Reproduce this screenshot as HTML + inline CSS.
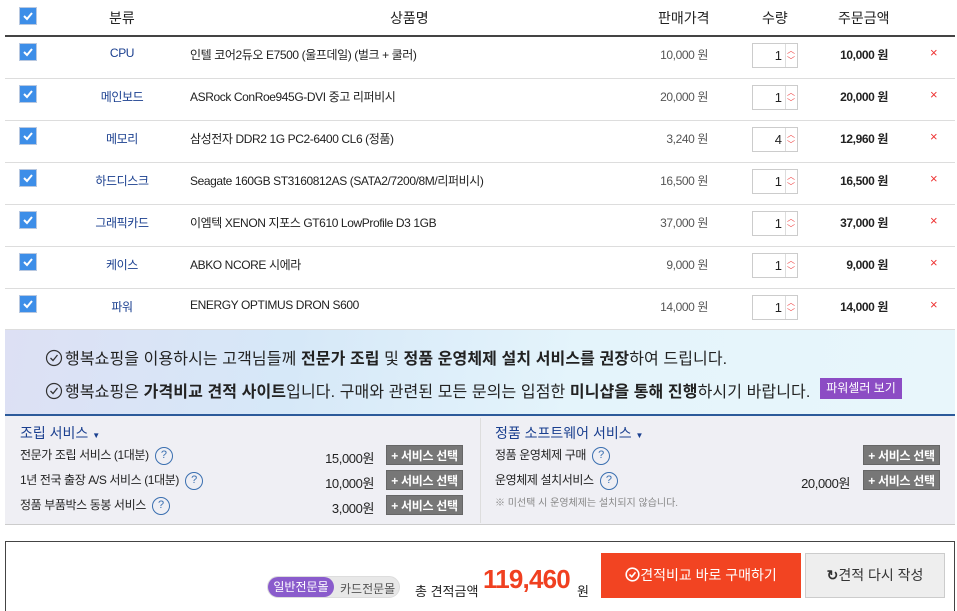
<!DOCTYPE html>
<html><head><meta charset="utf-8"><style>
*{box-sizing:border-box;margin:0;padding:0}
body{width:957px;height:608px;overflow:hidden;background:#fff;font-family:"Liberation Sans","Noto Sans CJK KR",sans-serif;font-size:12px;color:#222;position:relative}
.a{position:absolute;white-space:nowrap}
.r{letter-spacing:-0.4px}
.cb{position:absolute;width:18px;height:18px;background:#3d8ee8;border:1px solid #b8c8e0;left:19px}
.cb svg{position:absolute;left:2px;top:2px}
.hl{position:absolute;left:5px;width:950px;height:1px;background:#ddd}
.q{position:absolute;left:752px;width:46px;height:25px;border:1px solid #ccc;background:#fff}
.q span{position:absolute;right:15px;top:4px;font-size:13px}
.q i{position:absolute;left:32px;top:0;width:1px;height:23px;background:#ddd}
.q b{position:absolute;left:34px;font-size:8px;color:#e44;font-weight:normal}
.btn{position:absolute;width:77px;height:20px;background:#777;color:#fff;font-size:12px;font-weight:bold;text-align:center;line-height:20px;border:1px solid #666;letter-spacing:-0.3px}
.qm{display:inline-block;width:18px;height:18px;border:1.5px solid #3a6fb0;border-radius:50%;color:#3a6fb0;font-size:11px;text-align:center;line-height:15px;margin-left:6px;vertical-align:middle}
.ban{font-size:16px;letter-spacing:0.1px}
.ban svg{vertical-align:-3px;margin-right:2px}
</style></head><body>
<div class="cb" style="top:7px"><svg width="12" height="12"><path d="M2 6 L5 9 L10 3" stroke="#fff" stroke-width="2" fill="none"/></svg></div>
<div class="a" style="left:109px;top:8px;font-size:14px">분류</div>
<div class="a" style="left:390px;top:8px;font-size:14px">상품명</div>
<div class="a" style="left:658px;top:8px;font-size:14px">판매가격</div>
<div class="a" style="left:762px;top:8px;font-size:14px">수량</div>
<div class="a" style="left:838px;top:8px;font-size:14px">주문금액</div>
<div style="position:absolute;left:5px;top:35px;width:950px;height:2px;background:#444"></div>
<div id="rows"></div>
<script>
var d=[["CPU","인텔 코어2듀오 E7500 (울프데일) (벌크 + 쿨러)","10,000","1","10,000"],
["메인보드","ASRock ConRoe945G-DVI 중고 리퍼비시","20,000","1","20,000"],
["메모리","삼성전자 DDR2 1G PC2-6400 CL6 (정품)","3,240","4","12,960"],
["하드디스크","Seagate 160GB ST3160812AS (SATA2/7200/8M/리퍼비시)","16,500","1","16,500"],
["그래픽카드","이엠텍 XENON 지포스 GT610 LowProfile D3 1GB","37,000","1","37,000"],
["케이스","ABKO NCORE 시에라","9,000","1","9,000"],
["파워","ENERGY OPTIMUS DRON S600","14,000","1","14,000"]];
var h="";
d.forEach(function(r,i){var y=37+i*42;
h+='<div class="cb" style="top:'+(y+6)+'px"><svg width="12" height="12"><path d="M2 6 L5 9 L10 3" stroke="#fff" stroke-width="2" fill="none"/></svg></div>';
h+='<div class="a r" style="left:62px;width:120px;text-align:center;top:'+(y+9)+'px;color:#1a3f8f">'+r[0]+'</div>';
h+='<div class="a r" style="left:190px;top:'+(y+9)+'px">'+r[1]+'</div>';
h+='<div class="a r" style="left:600px;width:108px;text-align:right;top:'+(y+9)+'px;color:#555">'+r[2]+' 원</div>';
h+='<div class="q" style="top:'+(y+6)+'px"><span>'+r[3]+'</span><i></i><b style="top:1px">︿</b><b style="top:11px">﹀</b></div>';
h+='<div class="a r" style="left:780px;width:108px;text-align:right;top:'+(y+9)+'px;font-weight:bold">'+r[4]+' 원</div>';
h+='<div class="a" style="left:930px;top:'+(y+8)+'px;color:#e33;font-size:13px">×</div>';
if(i<6)h+='<div class="hl" style="top:'+(y+41)+'px"></div>';});
document.getElementById("rows").innerHTML=h;
</script>
<div style="position:absolute;left:5px;top:329px;width:950px;height:87px;background:linear-gradient(100deg,#dde0f4 0%,#d6e8f8 30%,#e4f4fb 60%,#e8f6fb 100%);border-top:1px solid #ddd;border-bottom:2px solid #2c5a9a"></div>
<div class="a ban" style="left:45px;top:345px"><svg width="18" height="18"><circle cx="9" cy="9" r="7.5" stroke="#333" stroke-width="1.2" fill="none"/><path d="M5.5 9 L8 11.5 L12.5 6" stroke="#333" stroke-width="1.3" fill="none"/></svg>행복쇼핑을 이용하시는 고객님들께 <b>전문가 조립</b> 및 <b>정품 운영체제 설치 서비스를 권장</b>하여 드립니다.</div>
<div class="a ban" style="left:45px;top:378px"><svg width="18" height="18"><circle cx="9" cy="9" r="7.5" stroke="#333" stroke-width="1.2" fill="none"/><path d="M5.5 9 L8 11.5 L12.5 6" stroke="#333" stroke-width="1.3" fill="none"/></svg>행복쇼핑은 <b>가격비교 견적 사이트</b>입니다. 구매와 관련된 모든 문의는 입점한 <b>미니샵을 통해 진행</b>하시기 바랍니다.</div>
<div class="a" style="left:820px;top:378px;width:82px;height:21px;background:#8c4cc4;color:#fff;font-size:12px;text-align:center;line-height:21px">파워셀러 보기</div>
<div style="position:absolute;left:5px;top:416px;width:950px;height:109px;background:#efeff4;border-bottom:1px solid #ccc"></div>
<div style="position:absolute;left:480px;top:418px;width:1px;height:105px;background:#ddd"></div>
<div class="a" style="left:20px;top:423px;font-size:14px;color:#1a3f8f">조립 서비스 <span style="font-size:8px">▼</span></div>
<div class="a" style="left:495px;top:423px;font-size:14px;color:#1a3f8f">정품 소프트웨어 서비스 <span style="font-size:8px">▼</span></div>
<div class="a r" style="left:20px;top:446px">전문가 조립 서비스 (1대분)<span class="qm">?</span></div>
<div class="a r" style="left:20px;top:471px">1년 전국 출장 A/S 서비스 (1대분)<span class="qm">?</span></div>
<div class="a r" style="left:20px;top:496px">정품 부품박스 동봉 서비스<span class="qm">?</span></div>
<div class="a r" style="left:300px;width:74px;text-align:right;top:448px;font-size:13px">15,000원</div>
<div class="a r" style="left:300px;width:74px;text-align:right;top:473px;font-size:13px">10,000원</div>
<div class="a r" style="left:300px;width:74px;text-align:right;top:498px;font-size:13px">3,000원</div>
<div class="btn" style="left:386px;top:445px">+ 서비스 선택</div>
<div class="btn" style="left:386px;top:470px">+ 서비스 선택</div>
<div class="btn" style="left:386px;top:495px">+ 서비스 선택</div>
<div class="a r" style="left:495px;top:446px">정품 운영체제 구매<span class="qm">?</span></div>
<div class="a r" style="left:495px;top:471px">운영체제 설치서비스<span class="qm">?</span></div>
<div class="a" style="left:495px;top:494px;font-size:10px;color:#888">※ 미선택 시 운영체제는 설치되지 않습니다.</div>
<div class="a r" style="left:770px;width:80px;text-align:right;top:473px;font-size:13px">20,000원</div>
<div class="btn" style="left:863px;top:445px">+ 서비스 선택</div>
<div class="btn" style="left:863px;top:470px">+ 서비스 선택</div>
<div style="position:absolute;left:5px;top:541px;width:950px;height:70px;border:1px solid #444;border-bottom:none"></div>
<div class="a" style="left:267px;top:576px;width:133px;height:22px;border-radius:11px;background:#e8e8e8;border:1px solid #ddd"></div>
<div class="a" style="left:268px;top:577px;width:66px;height:20px;border-radius:10px;background:#8a5ccc;color:#fff;font-size:12px;text-align:center;line-height:20px">일반전문몰</div>
<div class="a" style="left:340px;top:580px;font-size:12px;color:#555">카드전문몰</div>
<div class="a" style="left:415px;top:581px;font-size:13px">총 견적금액</div>
<div class="a" style="left:483px;top:564px;font-size:26px;font-weight:bold;color:#f04020;letter-spacing:-0.8px">119,460</div>
<div class="a" style="left:577px;top:581px;font-size:13px">원</div>
<div class="a" style="left:601px;top:553px;width:200px;height:45px;background:#f24422;color:#fff;font-size:14px;text-align:center;line-height:45px"><svg width="15" height="15" style="vertical-align:-2px"><circle cx="7.5" cy="7.5" r="6.3" stroke="#fff" stroke-width="1.6" fill="none"/><path d="M4.5 7.5 L6.8 9.8 L10.5 5.3" stroke="#fff" stroke-width="1.6" fill="none"/></svg>견적비교 바로 구매하기</div>
<div class="a" style="left:805px;top:553px;width:140px;height:45px;background:#eee;border:1px solid #ccc;color:#333;font-size:14px;text-align:center;line-height:43px"><b>↻</b>견적 다시 작성</div>
</body></html>
